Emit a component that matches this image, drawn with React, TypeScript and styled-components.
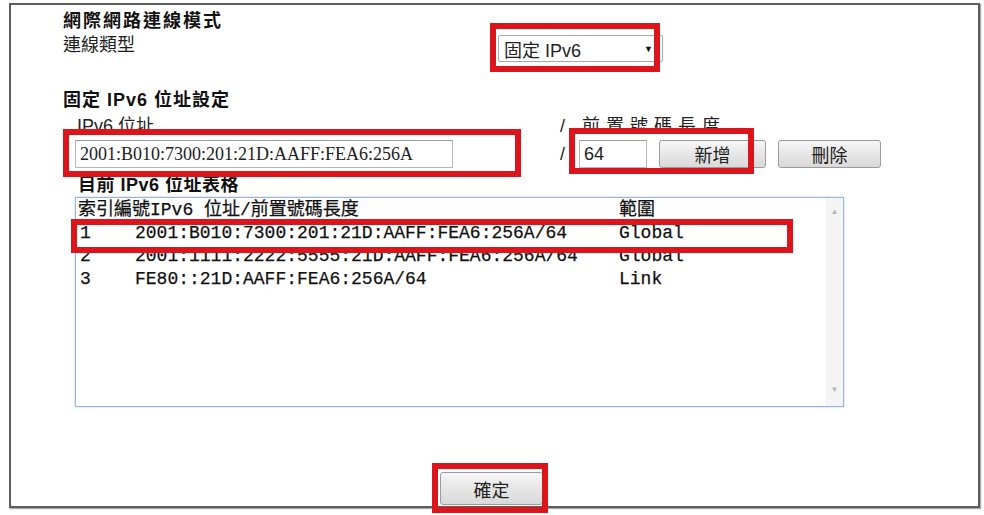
import React from "react";
import styled, { createGlobalStyle } from "styled-components";

const GlobalStyle = createGlobalStyle`
  html, body {
    margin: 0;
    padding: 0;
    background: #fff;
  }
  body {
    font-family: "Liberation Sans", "Noto Sans CJK TC", sans-serif;
    color: #1e1e1e;
  }
`;

interface AddressRow {
    index: string;
    address: string;
    scope: string;
}

const rows: AddressRow[] = [
    { index: "1", address: "2001:B010:7300:201:21D:AAFF:FEA6:256A/64", scope: "Global" },
    { index: "2", address: "2001:1111:2222:5555:21D:AAFF:FEA6:256A/64", scope: "Global" },
    { index: "3", address: "FE80::21D:AAFF:FEA6:256A/64", scope: "Link" },
];

// red annotation boxes drawn over the form
const highlights = [
    { left: 490, top: 23, width: 170, height: 49 },
    { left: 63, top: 129, width: 458, height: 48 },
    { left: 569, top: 128, width: 185, height: 46 },
    { left: 71, top: 219, width: 722, height: 34 },
    { left: 432, top: 463, width: 116, height: 50 },
];

const App: React.FC = () => {
    return (
        <Page>
            <GlobalStyle />
            <Frame>
                <Main>
                    <SectionTitle $gap={5} $spacing={2}>網際網路連線模式</SectionTitle>
                    <FieldRow>
                        <FieldLabel>連線類型</FieldLabel>
                        <Select>
                            <span>固定 IPv6</span>
                            <Caret>▼</Caret>
                        </Select>
                    </FieldRow>

                    <SectionTitle $gap={27} $spacing={1}>固定 IPv6 位址設定</SectionTitle>
                    <AddressGrid>
                        <SubLabel $pad={2}>IPv6 位址</SubLabel>
                        <SubLabel $pad={0} $spacing={6}>/ 前置號碼長度</SubLabel>
                        <TextInput $width={378} $serif readOnly value="2001:B010:7300:201:21D:AAFF:FEA6:256A" />
                        <PrefixGroup>
                            <Slash>/</Slash>
                            <TextInput $width={68} readOnly value="64" />
                            <FormButton $width={107}>新增</FormButton>
                            <FormButton $width={103}>刪除</FormButton>
                        </PrefixGroup>
                    </AddressGrid>

                    <SectionTitle $gap={6} $indent={15} $spacing={0.5}>目前 IPv6 位址表格</SectionTitle>
                    <ListBox>
                        <ListBody>
                            <ListRow>
                                <HeaderCell>索引編號IPv6 位址/前置號碼長度</HeaderCell>
                                <span>範圍</span>
                            </ListRow>
                            {rows.map((row) => (
                                <ListRow key={row.index}>
                                    <IndexCell>{row.index}</IndexCell>
                                    <span>{row.address}</span>
                                    <span>{row.scope}</span>
                                </ListRow>
                            ))}
                        </ListBody>
                        <ScrollBar>
                            <span>▲</span>
                            <span>▼</span>
                        </ScrollBar>
                    </ListBox>
                </Main>
                <Footer>
                    <FormButton $width={103} $height={33}>確定</FormButton>
                </Footer>
            </Frame>
            {highlights.map((h, i) => (
                <Highlight key={i} style={{ left: h.left, top: h.top, width: h.width, height: h.height }} />
            ))}
        </Page>
    );
};

export default App;

const Page = styled.div`
    position: relative;
    width: 984px;
    height: 515px;
    padding: 3px 0 0 9px;
    box-sizing: border-box;
    overflow: hidden;
`;

const Frame = styled.div`
    width: 971px;
    height: 505px;
    box-sizing: border-box;
    border: 2px solid #5e5e5e;
    box-shadow: 1px 1px 1px #a8a8a8;
    display: flex;
    flex-direction: column;
`;

const Main = styled.div`
    padding-left: 52px;
    display: flex;
    flex-direction: column;
    align-items: flex-start;
`;

const SectionTitle = styled.div<{ $gap: number; $indent?: number; $spacing: number }>`
    margin: ${(p) => p.$gap}px 0 0 ${(p) => p.$indent ?? 0}px;
    font-size: 18px;
    font-weight: 700;
    line-height: 22px;
    letter-spacing: ${(p) => p.$spacing}px;
    color: #111;
`;

const FieldRow = styled.div`
    display: flex;
    align-items: flex-start;
    margin-top: 2px;
`;

const FieldLabel = styled.div`
    width: 435px;
    font-size: 18px;
    line-height: 22px;
`;

const Select = styled.div`
    margin-top: 1px;
    width: 165px;
    height: 27px;
    box-sizing: border-box;
    border: 1px solid #a9a9a9;
    border-radius: 2px;
    background: #fff;
    display: flex;
    align-items: center;
    justify-content: space-between;
    padding: 0 9px 0 5px;
    font-size: 18px;
    color: #222;
`;

const Caret = styled.span`
    font-size: 9px;
    color: #111;
`;

const AddressGrid = styled.div`
    margin: 4px 0 0 12px;
    display: grid;
    grid-template-columns: 485px auto;
    row-gap: 3px;
`;

const SubLabel = styled.div<{ $pad: number; $spacing?: number }>`
    padding-left: ${(p) => p.$pad}px;
    font-size: 18px;
    line-height: 22px;
    letter-spacing: ${(p) => p.$spacing ?? 0}px;
    color: #222;
`;

const TextInput = styled.input<{ $width: number; $serif?: boolean }>`
    width: ${(p) => p.$width}px;
    height: 28px;
    box-sizing: border-box;
    margin: 0;
    padding: 0 4px;
    border: 1px solid #b5b7bd;
    border-top-color: #9a9ca2;
    border-radius: 0;
    outline: none;
    background: #fff;
    font-family: ${(p) => (p.$serif ? '"Liberation Serif", serif' : '"Liberation Sans", sans-serif')};
    font-size: 18px;
    color: #222;
`;

const PrefixGroup = styled.div`
    display: flex;
    align-items: center;
`;

const Slash = styled.span`
    font-size: 18px;
    margin-right: 14px;
    color: #222;
`;

const FormButton = styled.button<{ $width: number; $height?: number }>`
    width: ${(p) => p.$width}px;
    height: ${(p) => p.$height ?? 28}px;
    margin-left: 12px;
    padding: 0;
    box-sizing: border-box;
    border: 1px solid #9c9c9c;
    border-radius: 3px;
    background: linear-gradient(#f7f7f7, #e6e6e6 50%, #d9d9d9);
    font-family: "Noto Sans CJK TC", sans-serif;
    font-size: 18px;
    color: #222;
`;

const ListBox = styled.div`
    margin: 1px 0 0 12px;
    width: 769px;
    height: 210px;
    box-sizing: border-box;
    border: 1px solid #98b6dc;
    box-shadow: 0 0 2px rgba(110, 150, 205, 0.5);
    background: #fff;
    display: flex;
`;

const ListBody = styled.div`
    flex: 1;
    padding: 1px 0 0 2px;
    font-family: "Liberation Mono", "Noto Sans CJK TC", monospace;
    font-size: 18px;
    line-height: 23px;
    color: #111;
    -webkit-text-stroke: 0.25px #111;
`;

const ListRow = styled.div`
    display: grid;
    grid-template-columns: 57px 484px auto;
    white-space: pre;
`;

const HeaderCell = styled.span`
    grid-column: span 2;
`;

const IndexCell = styled.span`
    padding-left: 2px;
`;

const ScrollBar = styled.div`
    width: 17px;
    background: #f4f4f4;
    display: flex;
    flex-direction: column;
    justify-content: space-between;
    align-items: center;
    padding: 9px 0 12px;
    box-sizing: border-box;
    font-size: 8px;
    color: #b4b4b4;
    -webkit-text-stroke: 0;
`;

const Footer = styled.div`
    margin-top: auto;
    display: flex;
    justify-content: center;
    padding: 0 18px 1px 0;
`;

const Highlight = styled.div`
    position: absolute;
    box-sizing: border-box;
    border: 6px solid #dc141c;
    pointer-events: none;
`;
